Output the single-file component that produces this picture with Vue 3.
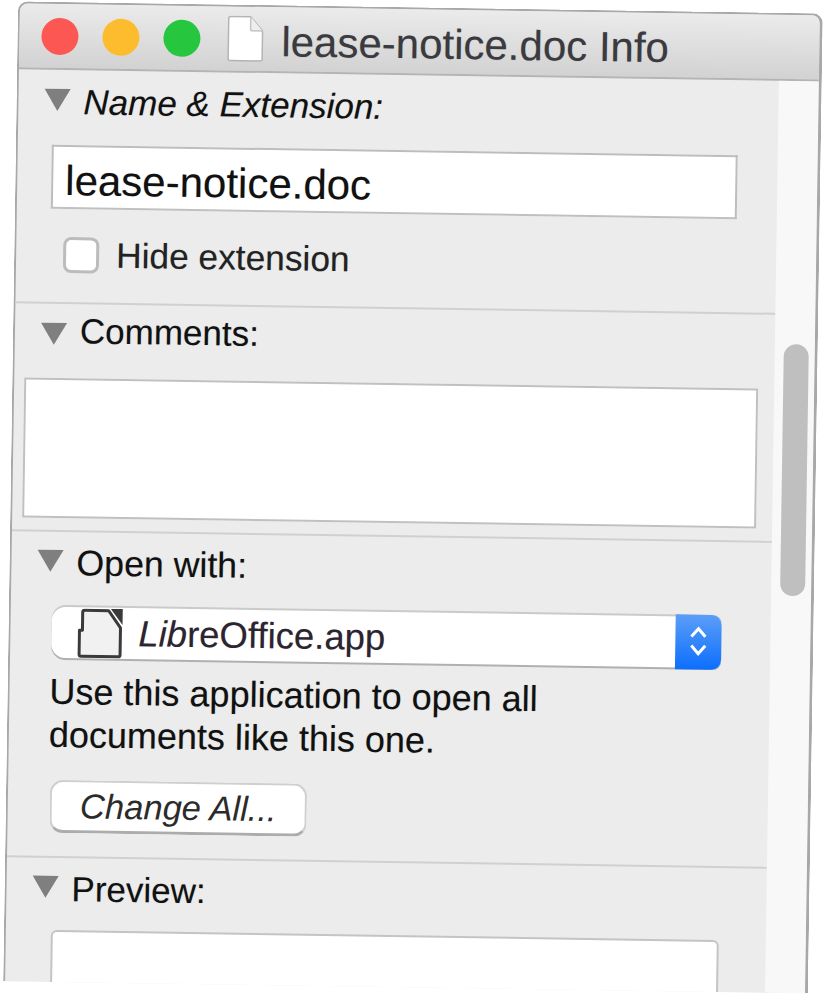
<template>
  <div class="page">
    <div class="stage">
      <div class="window">
        <header class="titlebar">
          <span class="light red"></span>
          <span class="light yellow"></span>
          <span class="light green"></span>
          <svg class="doc" width="38" height="47" viewBox="0 0 38 47">
            <path d="M2 3a2 2 0 0 1 2-2h20l12 14v28a2 2 0 0 1-2 2H4a2 2 0 0 1-2-2z" fill="#fff" stroke="#b4b4b4" stroke-width="1.5" />
            <path d="M24 1v12a2 2 0 0 0 2 2h10" fill="#eee" stroke="#c4c4c4" stroke-width="1.5" />
          </svg>
          <h1 class="title">lease-notice.doc Info</h1>
        </header>

        <div class="body">
          <main class="panels">
            <section class="panel name-panel">
              <div class="heading"><i class="tri"></i><em>Name &amp; Extension:</em></div>
              <div class="name-input">lease-notice.doc</div>
              <label class="check"><span class="box"></span>Hide extension</label>
            </section>

            <section class="panel comments-panel">
              <div class="heading"><i class="tri"></i>Comments:</div>
              <div class="comments"></div>
            </section>

            <section class="panel open-panel">
              <div class="heading"><i class="tri"></i>Open with:</div>
              <div class="select">
                <svg class="app-icon" width="46" height="50" viewBox="0 0 46 50">
                  <path d="M7 2H31L43 19V46a2 2 0 0 1-2 2H4a2 2 0 0 1-2-2V22h3V4a2 2 0 0 1 2-2z" fill="#f1f1f1" stroke="#3a3a3a" stroke-width="3" stroke-linejoin="round" />
                  <path d="M33 0H45V16z" fill="#3a3a3a" />
                </svg>
                <span class="app-name"><em>Lib</em>reOffice.app</span>
                <span class="stepper">
                  <svg width="20" height="36" viewBox="0 0 20 36" fill="none" stroke="#fff" stroke-width="3">
                    <path d="M3 12 10 4l7 8" />
                    <path d="M3 21l7 8 7-8" />
                  </svg>
                </span>
              </div>
              <p class="hint">Use this application to open all<br />documents like this one.</p>
              <button class="change"><em>Change All...</em></button>
            </section>

            <section class="panel preview-panel">
              <div class="heading"><i class="tri"></i>Preview:</div>
              <div class="preview"></div>
            </section>
          </main>

          <aside class="track"><div class="thumb"></div></aside>
        </div>
      </div>
    </div>
  </div>
</template>

<script setup>
</script>

<style>
html,
body {
  margin: 0;
  background: #fff;
  overflow: hidden;
}
</style>

<style scoped>
.page {
  width: 829px;
  height: 1000px;
  overflow: hidden;
  background: #fff;
  font-family: "Liberation Sans", Arial, sans-serif;
  color: #111;
  text-shadow: 0 0 1px rgba(0, 0, 0, 0.25);
}

/* the shot is slightly tilted */
.stage {
  width: 840px;
  height: 1000px;
  padding: 1px 0 0 18px;
  box-sizing: border-box;
  transform: rotate(0.87deg);
  transform-origin: 0 0;
}

.window {
  width: 805px;
  height: 980px;
  box-sizing: border-box;
  border: 2px solid #a8a8a8;
  border-right-width: 3px;
  border-bottom: 0;
  border-radius: 10px 10px 0 0;
  overflow: hidden;
  display: flex;
  flex-direction: column;
  background: #ececec;
}

.titlebar {
  height: 64px;
  flex: none;
  display: flex;
  align-items: center;
  padding-left: 22px;
  background: linear-gradient(#ebebeb, #d2d2d2);
  border-bottom: 2px solid #b4b4b4;
}

.light {
  width: 37px;
  height: 37px;
  border-radius: 50%;
  margin-right: 24px;
  flex: none;
}
.red { background: #fc5753; }
.yellow { background: #fdbc2e; }
.green { background: #27c63f; }

.doc {
  margin-left: 2px;
  flex: none;
}

.title {
  margin: 6px 0 0 17px;
  font-size: 42px;
  line-height: 50px;
  font-weight: 400;
  color: #3a3a3f;
  white-space: nowrap;
}

.body {
  flex: 1;
  min-height: 0;
  display: flex;
}

.panels {
  width: 760px;
  flex: none;
}

.panel {
  box-sizing: border-box;
  border-bottom: 2px solid #d0d0d0;
  overflow: hidden;
}
.name-panel { height: 234px; }
.comments-panel { height: 228px; }
.open-panel { height: 326px; }
.preview-panel { height: 130px; border-bottom: 0; }

.heading {
  height: 40px;
  margin-top: 11px;
  padding-left: 65px;
  position: relative;
  font-size: 35px;
  line-height: 40px;
  white-space: nowrap;
}
.name-panel .heading { margin-top: 12px; }
.comments-panel .heading { margin-top: 7px; }
.open-panel .heading { font-size: 35.7px; }

.tri {
  position: absolute;
  left: 26px;
  top: 7px;
  border-left: 13px solid transparent;
  border-right: 13px solid transparent;
  border-top: 22px solid #7f7f7f;
}
.comments-panel .tri { top: 12px; }

.name-input {
  box-sizing: border-box;
  width: 686px;
  height: 64px;
  margin: 23px 0 0 34px;
  padding: 6px 0 0 12px;
  background: #fff;
  border: 2px solid #bdbdbd;
  border-bottom-color: #c0c0c0;
  font-size: 42px;
  line-height: 55px;
  white-space: nowrap;
}

.check {
  display: flex;
  align-items: center;
  margin: 28px 0 0 47px;
  font-size: 35.3px;
  line-height: 36px;
  color: #222;
}

.box {
  box-sizing: border-box;
  width: 36px;
  height: 36px;
  margin-right: 17px;
  background: #fff;
  border: 3px solid #bcbcbc;
  border-radius: 8px;
}

.comments {
  box-sizing: border-box;
  width: 734px;
  height: 140px;
  margin: 27px 0 0 10px;
  background: #fff;
  border: 2px solid #c0c0c0;
}

.select {
  width: 670px;
  height: 51px;
  margin: 24px 0 0 41px;
  display: flex;
  align-items: center;
  background: #fff;
  border-radius: 14px 8px 8px 14px;
  box-shadow: 0 2px 0 #b0b0b0, 0 -2px 0 #cacaca;
  position: relative;
}

.app-icon {
  margin-left: 26px;
  flex: none;
}

.app-name {
  margin-left: 15px;
  font-size: 36.5px;
  line-height: 40px;
  color: #2c2430;
}

.stepper {
  margin: -2px 0 -2px auto;
  width: 46px;
  height: 55px;
  flex: none;
  display: flex;
  align-items: center;
  justify-content: center;
  border-radius: 0 10px 10px 0;
  background: linear-gradient(#5b9ef8, #0d6efd);
}

.hint {
  margin: 12px 0 0 40px;
  font-size: 36px;
  line-height: 43px;
  white-space: nowrap;
}

.change {
  display: block;
  box-sizing: border-box;
  width: 257px;
  height: 53px;
  margin: 24px 0 0 42px;
  padding: 0;
  background: #fff;
  border: 2px solid #cfcfcf;
  border-bottom: 3px solid #acacac;
  border-radius: 13px;
  font: 34.6px/44px "Liberation Sans", Arial, sans-serif;
  color: #2b2b2b;
}

.preview {
  box-sizing: border-box;
  width: 668px;
  height: 100px;
  margin: 21px 0 0 45px;
  background: #fff;
  border: 2px solid #c4c4c4;
  border-radius: 6px 6px 0 0;
}

.track {
  flex: 1;
  padding-top: 263px;
  background: #f8f8f8;
}

.thumb {
  width: 25px;
  height: 252px;
  margin-left: 9px;
  border-radius: 13px;
  background: #bfbfbf;
}
</style>
